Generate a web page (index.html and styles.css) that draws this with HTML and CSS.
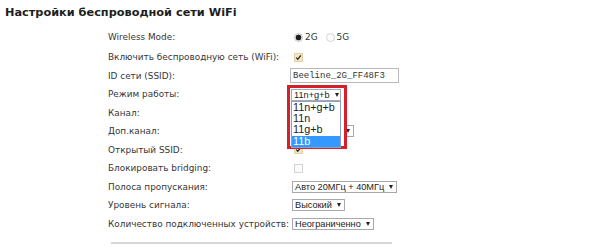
FILE: index.html
```html
<!DOCTYPE html>
<html lang="ru">
<head>
<meta charset="utf-8">
<title>Настройки беспроводной сети WiFi</title>
<link rel="stylesheet" href="styles.css">
</head>
<body>
<h1 class="title">Настройки беспроводной сети WiFi</h1>
<div class="form">
  <div class="label">Wireless Mode:</div>
  <div class="value">
    <span class="radio checked"></span><span class="opt">2G</span>
    <span class="radio"></span><span class="opt">5G</span>
  </div>

  <div class="label">Включить беспроводную сеть (WiFi):</div>
  <div class="value"><span class="check on"><svg width="9" height="9" viewBox="0 0 9 9"><rect x=".5" y=".5" width="8" height="8" fill="#f4e6c2" stroke="#e3d2a8"/><path d="M2.2 4.6 L3.8 6.2 L6.9 2.4" fill="none" stroke="#2a2a2a" stroke-width="1.3"/></svg></span></div>

  <div class="label">ID сети (SSID):</div>
  <div class="value"><span class="input">Beeline_2G_FF48F3</span></div>

  <div class="label">Режим работы:</div>
  <div class="value anchor">
    <span class="select top">11n+g+b<span class="arrow"></span></span>
    <div class="popup">
      <ul class="list">
        <li>11n+g+b</li>
        <li>11n</li>
        <li>11g+b</li>
        <li class="sel">11b</li>
      </ul>
    </div>
  </div>

  <div class="label">Канал:</div>
  <div class="value"><span class="select blank narrow"><span class="arrow"></span></span></div>

  <div class="label">Доп.канал:</div>
  <div class="value"><span class="select blank wide"><span class="arrow"></span></span></div>

  <div class="label">Открытый SSID:</div>
  <div class="value"><span class="check on"><svg width="9" height="9" viewBox="0 0 9 9"><rect x=".5" y=".5" width="8" height="8" fill="#f4e6c2" stroke="#e3d2a8"/><path d="M2.2 4.6 L3.8 6.2 L6.9 2.4" fill="none" stroke="#2a2a2a" stroke-width="1.3"/></svg></span></div>

  <div class="label">Блокировать bridging:</div>
  <div class="value"><span class="check"><svg width="9" height="9" viewBox="0 0 9 9"><rect x=".5" y=".5" width="8" height="8" fill="#fafafa" stroke="#d4d4d4"/></svg></span></div>

  <div class="label">Полоса пропускания:</div>
  <div class="value"><span class="select">Авто 20МГц + 40МГц<span class="arrow"></span></span></div>

  <div class="label">Уровень сигнала:</div>
  <div class="value"><span class="select">Высокий<span class="arrow"></span></span></div>

  <div class="label">Количество подключенных устройств:</div>
  <div class="value"><span class="select">Неограниченно<span class="arrow"></span></span></div>
</div>
<div class="rule"></div>
</body>
</html>
```

FILE: styles.css
```css
html, body {
  margin: 0;
  padding: 0;
  background: #ffffff;
}

body {
  width: 600px;
  height: 247px;
  overflow: hidden;
  font-family: "DejaVu Sans", Verdana, sans-serif;
  color: #333333;
}

.title {
  margin: 0;
  padding: 6px 0 0 5px;
  font-family: "DejaVu Sans", Verdana, sans-serif;
  font-weight: bold;
  font-size: 11.3px;
  line-height: 14px;
  color: #1e1e1e;
}

.form {
  display: grid;
  grid-template-columns: 182px auto;
  grid-template-rows: 21.5px;
  grid-auto-rows: 18.56px;
  align-items: center;
  padding-left: 108px;
  margin-top: 6.25px;
}

.label {
  font-size: 8.9px;
  line-height: 12px;
  color: #363636;
  white-space: nowrap;
}

.value {
  display: flex;
  align-items: center;
  height: 100%;
}

.anchor {
  position: relative;
}

.radio {
  width: 7px;
  height: 7px;
  border-radius: 50%;
  border: 1px solid #d2d2d2;
  background: #fdfdfd;
  margin-left: 4px;
  box-sizing: content-box;
}

.radio.checked {
  background: radial-gradient(circle, #1e1e1e 0 2.6px, #f3f3f3 3.2px);
  border-color: #c9c9c9;
}

.opt {
  font-size: 8.9px;
  margin-left: 2px;
  margin-right: 4px;
  color: #333;
}

.check {
  display: flex;
  margin-left: 4px;
}

.input {
  display: flex;
  align-items: center;
  box-sizing: border-box;
  width: 109px;
  height: 15px;
  border: 1px solid #b9b9b9;
  padding-left: 2px;
  font-family: "Liberation Mono", "Courier New", monospace;
  font-size: 9px;
  color: #333;
}

.select {
  display: inline-flex;
  align-items: center;
  box-sizing: border-box;
  height: 12px;
  border: 1px solid #a9a9a9;
  padding: 0 3px 0 2px;
  margin-left: 2px;
  font-family: "Liberation Sans", Arial, sans-serif;
  font-size: 9.2px;
  color: #222;
  background: #fff;
  white-space: nowrap;
}

.select.top {
  position: relative;
  z-index: 2;
  margin-left: 1px;
  margin-top: 2px;
  width: 50px;
  justify-content: space-between;
}

.select.blank {
  justify-content: flex-end;
}

.select.narrow {
  width: 40px;
}

.select.wide {
  width: 62px;
}

.arrow {
  width: 0;
  height: 0;
  border-left: 2.5px solid transparent;
  border-right: 2.5px solid transparent;
  border-top: 4px solid #222;
  margin-left: 5px;
}

.popup {
  position: absolute;
  z-index: 1;
  left: -3px;
  top: 0;
  width: 60px;
  height: 64px;
  box-sizing: border-box;
  border: 3px solid #d3202b;
  background: #fff;
}

.list {
  list-style: none;
  margin: 0;
  padding: 0;
  position: absolute;
  left: 1px;
  top: 13px;
  width: 50px;
  box-sizing: border-box;
  border: 1px solid #8aa2c8;
  background: #fff;
  font-family: "Liberation Sans", Arial, sans-serif;
  font-size: 10.8px;
  color: #222;
}

.list li {
  height: 11.25px;
  line-height: 11.25px;
  padding-left: 1px;
}

.list li.sel {
  background: #3399ff;
  color: #ffffff;
}

.rule {
  margin: 9px 0 0 111px;
  width: 281px;
  height: 2px;
  background: #d6d6d6;
}
```
